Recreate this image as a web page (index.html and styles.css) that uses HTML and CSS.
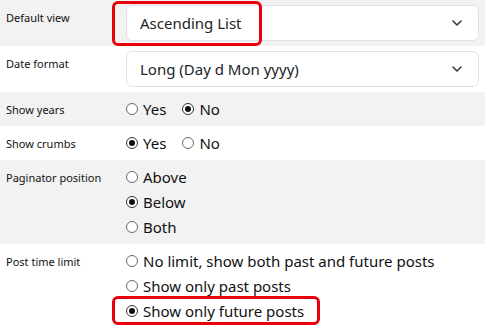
FILE: index.html
```html
<!DOCTYPE html>
<html>
<head>
<meta charset="utf-8">
<link rel="stylesheet" href="styles.css">
</head>
<body>
<table class="settings">
  <tr class="alt">
    <td class="label">Default view</td>
    <td class="value">
      <div class="select"><span>Ascending List</span>
        <svg class="chev" width="10" height="6" viewBox="0 0 10 6"><path d="M1 1 L5 5 L9 1" fill="none" stroke="#343a40" stroke-width="1.6" stroke-linecap="round" stroke-linejoin="round"/></svg>
      </div>
    </td>
  </tr>
  <tr>
    <td class="label">Date format</td>
    <td class="value">
      <div class="select"><span>Long (Day d Mon yyyy)</span>
        <svg class="chev" width="10" height="6" viewBox="0 0 10 6"><path d="M1 1 L5 5 L9 1" fill="none" stroke="#343a40" stroke-width="1.6" stroke-linecap="round" stroke-linejoin="round"/></svg>
      </div>
    </td>
  </tr>
  <tr class="alt">
    <td class="label">Show years</td>
    <td class="value radios">
      <div class="inline">
        <label class="opt"><span class="radio"></span>Yes</label>
        <label class="opt"><span class="radio on"></span>No</label>
      </div>
    </td>
  </tr>
  <tr>
    <td class="label">Show crumbs</td>
    <td class="value radios">
      <div class="inline">
        <label class="opt"><span class="radio on"></span>Yes</label>
        <label class="opt"><span class="radio"></span>No</label>
      </div>
    </td>
  </tr>
  <tr class="alt">
    <td class="label">Paginator position</td>
    <td class="value radios">
      <label class="opt"><span class="radio"></span>Above</label>
      <label class="opt"><span class="radio on"></span>Below</label>
      <label class="opt"><span class="radio"></span>Both</label>
    </td>
  </tr>
  <tr>
    <td class="label">Post time limit</td>
    <td class="value radios">
      <label class="opt"><span class="radio"></span>No limit, show both past and future posts</label>
      <label class="opt"><span class="radio"></span>Show only past posts</label>
      <label class="opt"><span class="radio on"></span>Show only future posts</label>
    </td>
  </tr>
</table>
<div class="mark mark-top"></div>
<div class="mark mark-bottom"></div>
</body>
</html>
```

FILE: styles.css
```css
html, body {
  margin: 0;
  padding: 0;
  background: #ffffff;
}
body {
  position: relative;
  width: 485px;
  height: 327px;
  overflow: hidden;
  font-family: "Noto Sans", "Open Sans", sans-serif;
  color: #111;
}
.settings {
  width: 485px;
  border-collapse: collapse;
}
.settings tr.alt {
  background: #f2f2f2;
}
.label {
  width: 105px;
  padding: 8px 6px 0 6px;
  vertical-align: top;
  font-size: 11px;
  line-height: 20px;
  color: #111;
  white-space: nowrap;
}
.value {
  padding: 5px 6px 5px 9px;
  vertical-align: top;
}
.radios {
  padding: 4px 6px 5px 9px;
}
.select {
  height: 36px;
  box-sizing: border-box;
  border: 1px solid #dee2e6;
  border-radius: 6px;
  background: #fff;
  display: flex;
  align-items: center;
  justify-content: space-between;
  padding: 0 16px 0 13px;
  font-size: 15px;
  color: #212529;
}
.chev {
  display: block;
}
.inline {
  display: flex;
  gap: 16px;
}
.opt {
  display: flex;
  align-items: center;
  gap: 5px;
  height: 25px;
  font-size: 15px;
  color: #111;
}
.radio {
  width: 12px;
  height: 12px;
  box-sizing: border-box;
  border: 1px solid #6a6a6a;
  border-radius: 50%;
  background: #fff;
  display: flex;
  align-items: center;
  justify-content: center;
  flex: none;
}
.radio.on {
  border-color: #333;
}
.radio.on::after {
  content: "";
  width: 6px;
  height: 6px;
  border-radius: 50%;
  background: #111;
}
.mark {
  position: absolute;
  border: 3px solid #e8000b;
  border-radius: 6px;
  box-sizing: border-box;
}
.mark-top {
  left: 112px;
  top: 1px;
  width: 150px;
  height: 45px;
}
.mark-bottom {
  left: 112px;
  top: 296px;
  width: 208px;
  height: 29px;
}
```
